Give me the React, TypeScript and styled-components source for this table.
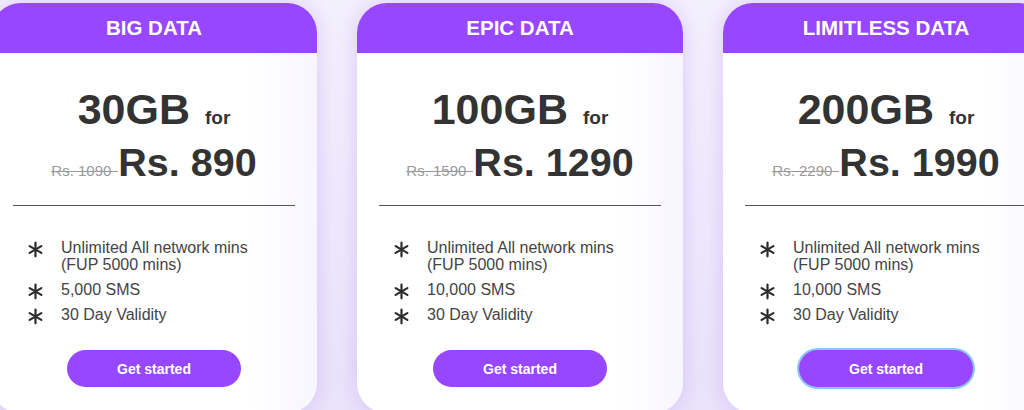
import styled, { createGlobalStyle } from "styled-components";

const GlobalStyle = createGlobalStyle`
  html, body {
    margin: 0;
    padding: 0;
    background: #f1ecfd;
    font-family: "Liberation Sans", Arial, sans-serif;
  }
`;

const plans = [
  { name: "BIG DATA", data: "30GB", oldPrice: "Rs. 1090", price: "Rs. 890", sms: "5,000 SMS" },
  { name: "EPIC DATA", data: "100GB", oldPrice: "Rs. 1590", price: "Rs. 1290", sms: "10,000 SMS" },
  { name: "LIMITLESS DATA", data: "200GB", oldPrice: "Rs. 2290", price: "Rs. 1990", sms: "10,000 SMS", focused: true },
];

const Page = styled.div`
  width: 1024px;
  height: 410px;
  overflow: hidden;
  display: flex;
  justify-content: center;
  gap: 40px;
  padding: 3px 0 0 16px;
  box-sizing: border-box;
  background: linear-gradient(180deg, #f4f1fd 0%, #ebe3fb 100%);
`;

const Card = styled.div`
  flex: 0 0 326px;
  height: 410px;
  border-radius: 30px;
  background: linear-gradient(90deg, #ffffff 80%, #f8f5fe 100%);
  box-shadow: 0 0 22px rgba(150, 100, 235, 0.28);
  overflow: hidden;
  display: flex;
  flex-direction: column;
  align-items: center;
`;

const Header = styled.div`
  width: 100%;
  height: 50px;
  background: #9747ff;
  color: #fff;
  font-weight: 700;
  font-size: 20.5px;
  display: flex;
  align-items: center;
  justify-content: center;
`;

const DataLine = styled.div`
  margin-top: 33px;
  display: flex;
  align-items: baseline;
  gap: 15px;
  color: #333;
  font-weight: 700;
`;

const Amount = styled.span`
  font-size: 43px;
  line-height: 46px;
`;

const For = styled.span`
  font-size: 19px;
`;

const PriceLine = styled.div`
  display: flex;
  align-items: baseline;
  color: #333;
  font-weight: 700;
  margin-top: 8px;
`;

const OldPrice = styled.span`
  font-size: 15px;
  font-weight: 400;
  color: #9a9a9a;
  text-decoration: line-through;
  padding-right: 7px;
  background: linear-gradient(#9a9a9a, #9a9a9a) no-repeat 0 58% / 100% 1px;
`;

const Price = styled.span`
  font-size: 39.5px;
  line-height: 44px;
`;

const Divider = styled.hr`
  width: calc(100% - 44px);
  margin: 21px 0 0;
  border: 0;
  border-top: 1px solid #555;
`;

const Features = styled.ul`
  list-style: none;
  align-self: stretch;
  margin: 33px 0 0;
  padding: 0 0 0 36px;
  display: flex;
  flex-direction: column;
  gap: 8px;
`;

const Feature = styled.li`
  display: flex;
  align-items: flex-start;
  gap: 17px;
  font-size: 16px;
  line-height: 17px;
  color: #444;
`;

const Star = styled.svg`
  flex: 0 0 17px;
  margin: 2px 0 -2px;
`;

const Button = styled.button<{ $focused?: boolean }>`
  margin-top: 27px;
  width: 174px;
  height: 37px;
  border: 0;
  border-radius: 19px;
  background: #9747ff;
  color: #fff;
  font-family: "Liberation Sans", Arial, sans-serif;
  font-weight: 700;
  font-size: 14px;
  box-shadow: ${(p) => (p.$focused ? "0 0 0 2px #8ec8f2" : "none")};
`;

function Asterisk() {
  return (
    <Star width="17" height="17" viewBox="0 0 20 20">
      <g stroke="#2c2c2c" strokeWidth="2.6" strokeLinecap="round">
        <line x1="10" y1="2" x2="10" y2="18" />
        <line x1="3.1" y1="6" x2="16.9" y2="14" />
        <line x1="3.1" y1="14" x2="16.9" y2="6" />
      </g>
    </Star>
  );
}

export default function App() {
  return (
    <>
      <GlobalStyle />
      <Page>
        {plans.map((plan) => (
          <Card key={plan.name}>
            <Header>{plan.name}</Header>
            <DataLine>
              <Amount>{plan.data}</Amount>
              <For>for</For>
            </DataLine>
            <PriceLine>
              <OldPrice>{plan.oldPrice}</OldPrice>
              <Price>{plan.price}</Price>
            </PriceLine>
            <Divider />
            <Features>
              <Feature>
                <Asterisk />
                <span>
                  Unlimited All network mins
                  <br />
                  (FUP 5000 mins)
                </span>
              </Feature>
              <Feature>
                <Asterisk />
                <span>{plan.sms}</span>
              </Feature>
              <Feature>
                <Asterisk />
                <span>30 Day Validity</span>
              </Feature>
            </Features>
            <Button $focused={plan.focused}>Get started</Button>
          </Card>
        ))}
      </Page>
    </>
  );
}
